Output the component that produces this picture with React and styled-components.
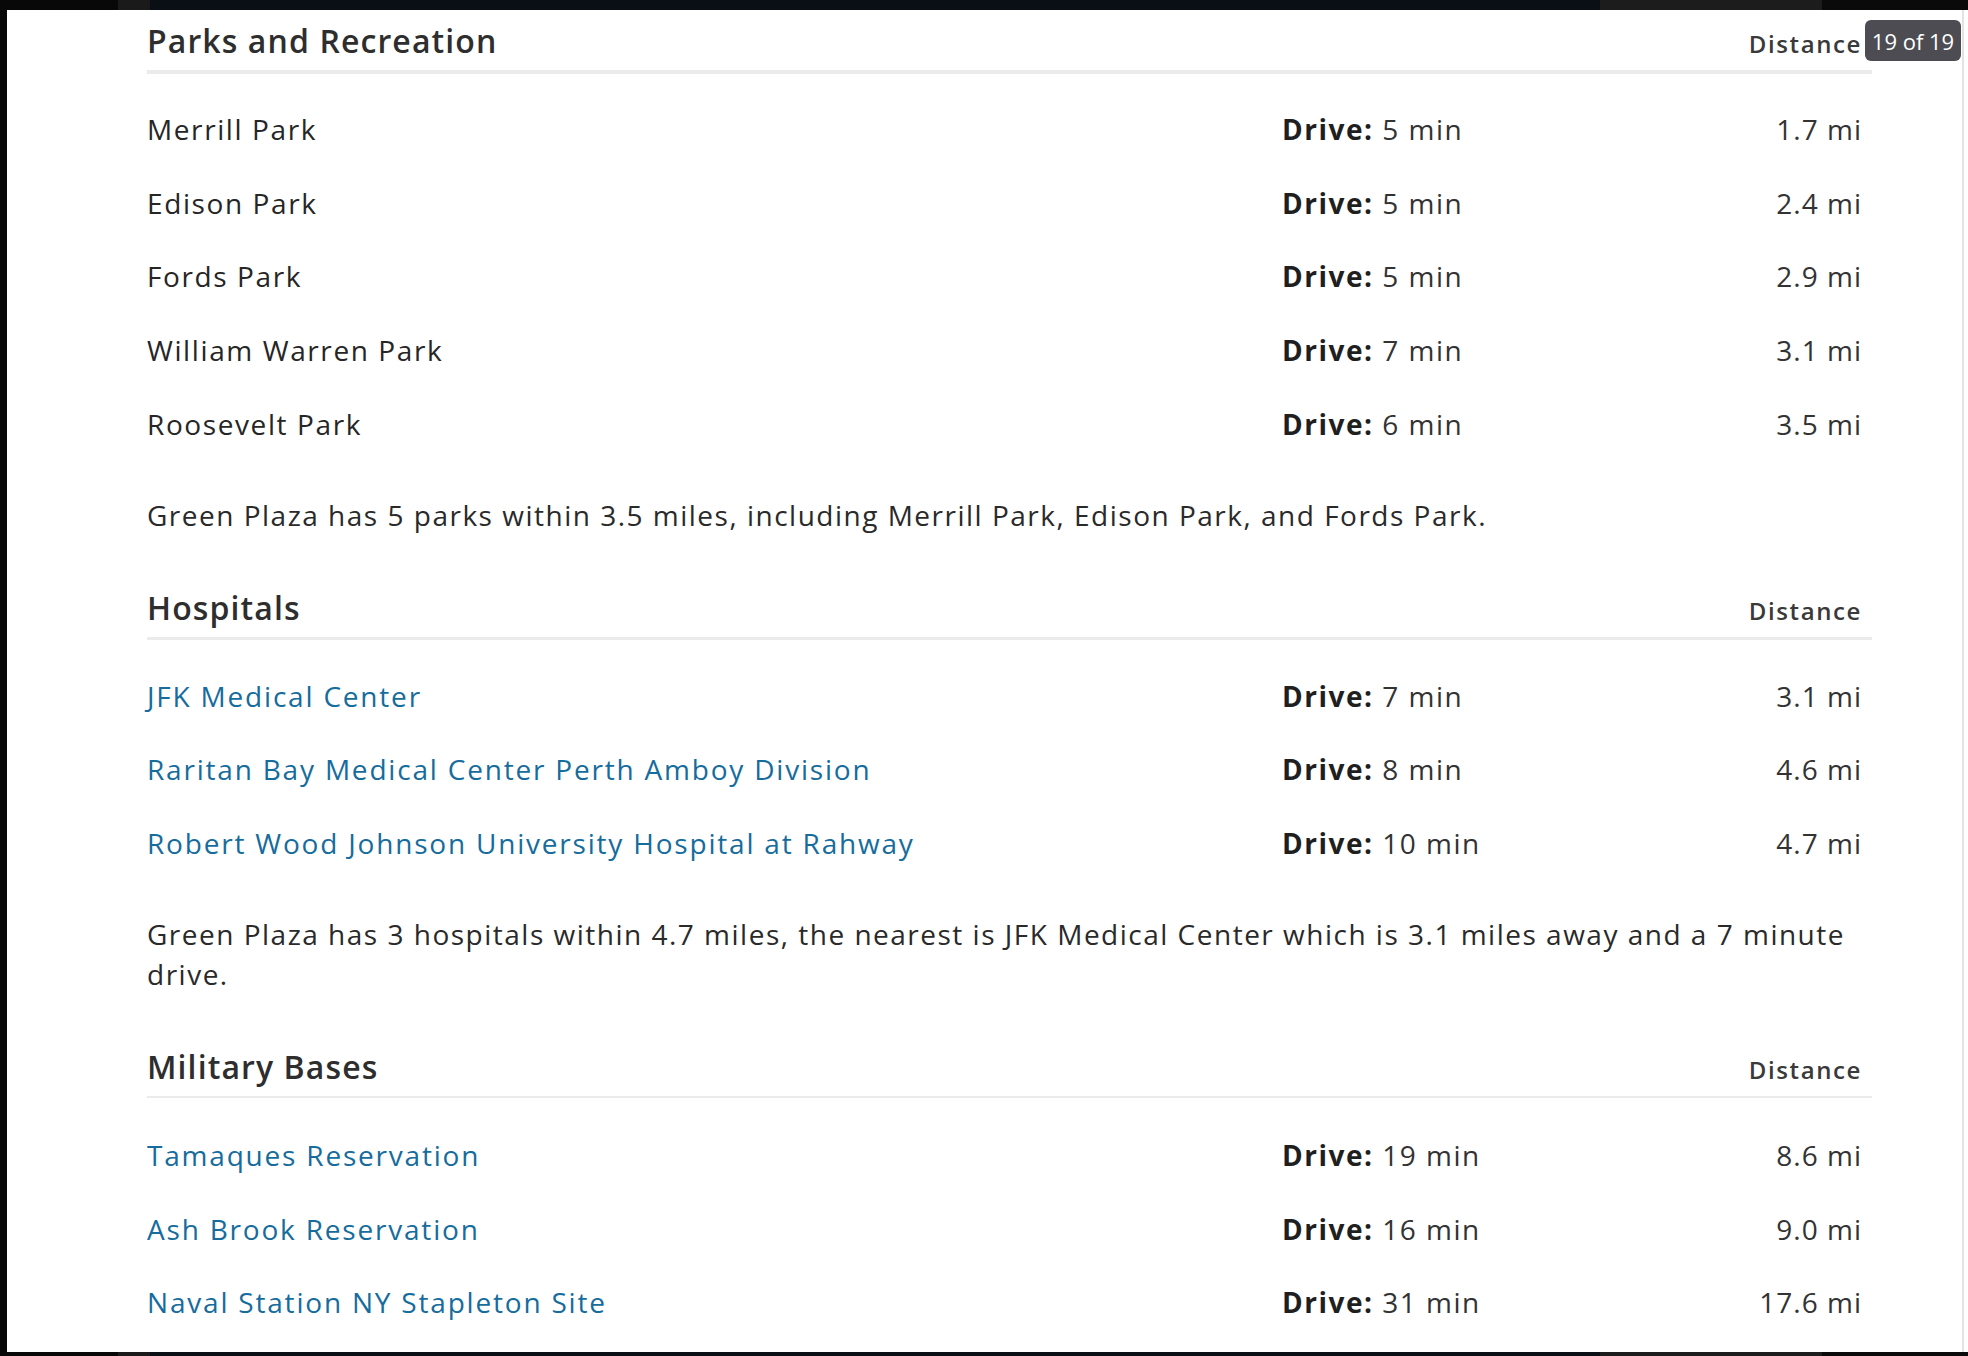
import React from 'react'
import styled, { createGlobalStyle } from 'styled-components'

const GlobalStyle = createGlobalStyle`
    html, body {
        margin: 0;
        padding: 0;
    }
    body {
        font-family: "Open Sans", Lato, sans-serif;
        background: #0a0d13;
    }
`

const sections = [
    {
        title: 'Parks and Recreation',
        rule: 4,
        links: false,
        items: [
            { name: 'Merrill Park', drive: 5, distance: '1.7' },
            { name: 'Edison Park', drive: 5, distance: '2.4' },
            { name: 'Fords Park', drive: 5, distance: '2.9' },
            { name: 'William Warren Park', drive: 7, distance: '3.1' },
            { name: 'Roosevelt Park', drive: 6, distance: '3.5' },
        ],
        summary: 'Green Plaza has 5 parks within 3.5 miles, including Merrill Park, Edison Park, and Fords Park.',
    },
    {
        title: 'Hospitals',
        rule: 3,
        links: true,
        items: [
            { name: 'JFK Medical Center', drive: 7, distance: '3.1' },
            { name: 'Raritan Bay Medical Center Perth Amboy Division', drive: 8, distance: '4.6' },
            { name: 'Robert Wood Johnson University Hospital at Rahway', drive: 10, distance: '4.7' },
        ],
        summary: 'Green Plaza has 3 hospitals within 4.7 miles, the nearest is JFK Medical Center which is 3.1 miles away and a 7 minute drive.',
    },
    {
        title: 'Military Bases',
        rule: 2,
        links: true,
        items: [
            { name: 'Tamaques Reservation', drive: 19, distance: '8.6' },
            { name: 'Ash Brook Reservation', drive: 16, distance: '9.0' },
            { name: 'Naval Station NY Stapleton Site', drive: 31, distance: '17.6' },
        ],
    },
]

export default function App() {
    return (
        <>
            <GlobalStyle />
            <Frame>
                <Panel>
                    {sections.map((section) => (
                        <Section key={section.title}>
                            <Header $rule={section.rule}>
                                <Title>{section.title}</Title>
                                <ColumnLabel>Distance</ColumnLabel>
                            </Header>

                            <List $rule={section.rule}>
                                {section.items.map((item) => (
                                    <Row key={item.name}>
                                        <Name $link={section.links}>{item.name}</Name>
                                        <Drive>
                                            <b>Drive:</b> {item.drive} min
                                        </Drive>
                                        <Distance>{item.distance} mi</Distance>
                                    </Row>
                                ))}
                            </List>

                            {section.summary && <Summary>{section.summary}</Summary>}
                        </Section>
                    ))}
                </Panel>

                <Counter>19 of 19</Counter>
            </Frame>
        </>
    )
}

const Frame = styled.div`
    position: relative;
    box-sizing: border-box;
    height: 1356px;
    padding: 10px 0 4px 7px;
    overflow: hidden;
    background: linear-gradient(
        90deg,
        #080808 0 118px,
        #1a1a1a 118px 150px,
        #0a0e15 150px 1600px,
        #1c1c1c 1600px 1822px,
        #0a0a0a 1822px
    );
`

const Panel = styled.main`
    box-sizing: border-box;
    height: 100%;
    padding: 11px 96px 0 140px;
    background: #fff;
    box-shadow: inset -4px 0 0 #fff, inset -6px 0 0 #e3e3e3;
    color: #2c2c2c;
`

const Section = styled.section`
    & + & {
        margin-top: 53px;
    }
`

const Header = styled.div`
    display: flex;
    align-items: baseline;
    justify-content: space-between;
    padding: 0 10px 9px 0;
    border-bottom: ${({ $rule }) => $rule}px solid #ebebeb;
`

const Title = styled.h2`
    margin: 0;
    font-size: 32px;
    line-height: 40px;
    font-weight: 600;
    letter-spacing: 1.1px;
    color: #2e2e2e;
`

const ColumnLabel = styled.span`
    font-size: 24px;
    font-weight: 600;
    letter-spacing: 1.6px;
    color: #3a3a3a;
`

const List = styled.ul`
    list-style: none;
    margin: ${({ $rule }) => 22 - $rule}px 0 0;
    padding: 0;
`

const Row = styled.li`
    display: grid;
    grid-template-columns: 1fr 380px 200px;
    align-items: center;
    height: 73.75px;
    padding-right: 10px;
    font-size: 28px;
    letter-spacing: 1.5px;
`

const Name = styled.span`
    font-weight: 400;
    letter-spacing: ${({ $link }) => ($link ? '1.8px' : '1.6px')};
    color: ${({ $link }) => ($link ? '#166c9c' : '#262626')};
`

const Drive = styled.span`
    color: #333;
    b {
        font-weight: 700;
        color: #1f1f1f;
    }
`

const Distance = styled.span`
    text-align: right;
    letter-spacing: 1px;
    color: #333;
`

const Summary = styled.p`
    margin: 34px 0 0;
    padding-right: 10px;
    font-size: 28px;
    line-height: 40px;
    letter-spacing: 1.5px;
    color: #2a2a2a;
`

const Counter = styled.div`
    position: absolute;
    top: 20px;
    right: 7px;
    display: flex;
    align-items: center;
    justify-content: center;
    width: 96px;
    height: 41px;
    border-radius: 6px;
    background: #4c4c52;
    color: #fff;
    font-family: "Open Sans", sans-serif;
    font-size: 22px;
`
